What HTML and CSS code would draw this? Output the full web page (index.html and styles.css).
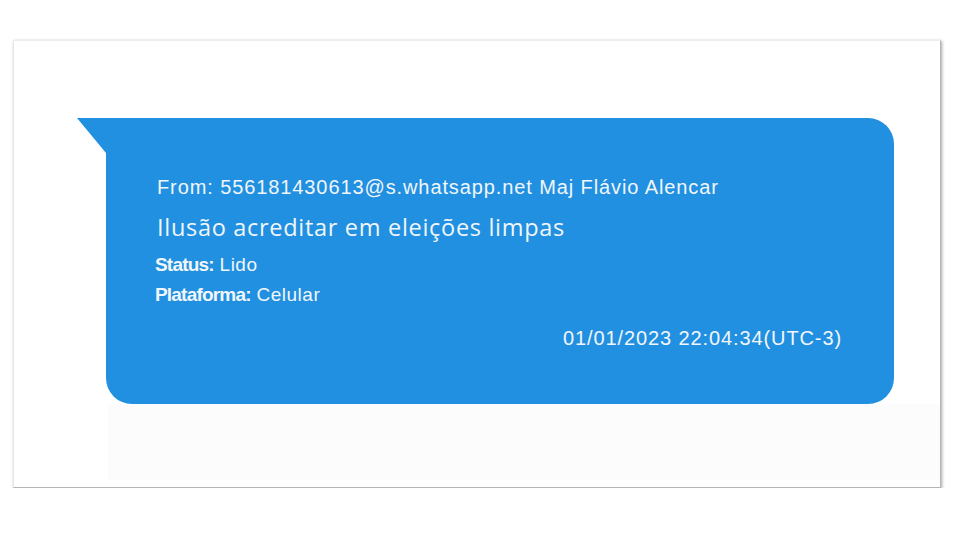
FILE: index.html
```html
<!DOCTYPE html>
<html lang="pt-BR">
<head>
    <meta charset="UTF-8">
    <meta name="viewport" content="width=device-width, initial-scale=1.0">
    <title>Mensagem</title>
    <link rel="stylesheet" href="styles.css">
</head>
<body>
    <div class="card">
        <div class="chat-row">
            <div class="tail"></div>
            <div class="bubble">
                <p class="from">From: 556181430613@s.whatsapp.net Maj Flávio Alencar</p>
                <p class="message">Ilusão acreditar em eleições limpas</p>
                <p class="meta status"><b>Status:</b> Lido</p>
                <p class="meta platform"><b>Plataforma:</b> Celular</p>
                <p class="timestamp">01/01/2023 22:04:34(UTC-3)</p>
            </div>
        </div>
        <div class="under"></div>
    </div>
</body>
</html>
```

FILE: styles.css
```css
:root {
    --bubble-color: #2190e0;
    --text-color: #f1f6fb;
    --radius: 26px;
}

body {
    margin: 0;
    padding-top: 40px;
    background-color: #fff;
    font-family: "Liberation Sans", Arial, sans-serif;
}

.card {
    width: 928px;
    height: 448px;
    margin-left: 13px;
    background-color: #fff;
    border-top: 1px solid #ececec;
    border-left: 1px solid #e6e6e6;
    border-right: 1px solid #b5b5b5;
    border-bottom: 1px solid #b5b5b5;
    box-shadow: 1px 1px 3px rgba(0, 0, 0, 0.35);
    box-sizing: border-box;
}

.chat-row {
    display: flex;
    margin: 77px 0 0 63px;
}

.tail {
    width: 29px;
    height: 35px;
    background-color: var(--bubble-color);
    clip-path: polygon(0 0, 100% 0, 100% 100%);
}

.bubble {
    position: relative;
    width: 788px;
    height: 286px;
    box-sizing: border-box;
    padding: 57px 52px 0 51px;
    background-color: var(--bubble-color);
    border-radius: 0 var(--radius) var(--radius) var(--radius);
    color: var(--text-color);
}

.bubble::after {
    content: "";
    position: absolute;
    top: 9px;
    right: -9px;
    width: 18px;
    height: 2px;
    background-color: #8a8a8a;
    z-index: -1;
}

.bubble p {
    margin: 0;
}

.from {
    font-size: 20px;
    line-height: 24px;
    letter-spacing: 0.9px;
}

.message {
    font-family: "Open Sans", "Liberation Sans", sans-serif;
    font-size: 23.5px;
    line-height: 28px;
    letter-spacing: 0.7px;
    margin-top: 14px !important;
}

.meta {
    font-size: 19px;
    line-height: 24px;
    letter-spacing: 0.5px;
    margin-left: -2px !important;
}

.meta b {
    letter-spacing: -0.8px;
}

.status {
    margin-top: 12px !important;
}

.platform {
    margin-top: 6px !important;
}

.timestamp {
    font-size: 20px;
    line-height: 24px;
    letter-spacing: 0.9px;
    text-align: right;
    margin-top: 19px !important;
}

.under {
    height: 76px;
    margin-left: 94px;
    background-color: #fcfcfc;
}
```
